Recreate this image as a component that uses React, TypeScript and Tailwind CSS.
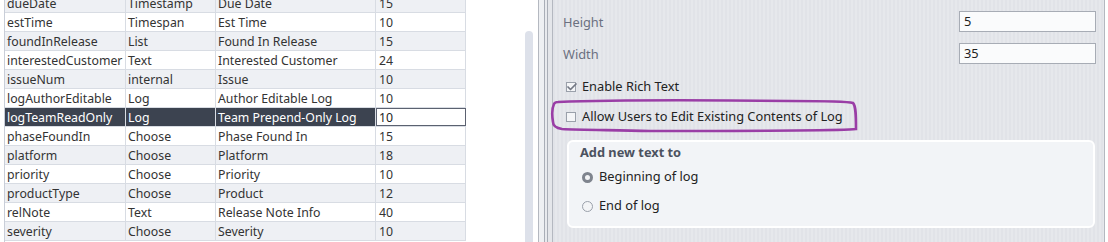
import { Check } from "lucide-react";

const rows = [
  ["dueDate", "Timestamp", "Due Date", "15"],
  ["estTime", "Timespan", "Est Time", "10"],
  ["foundInRelease", "List", "Found In Release", "15"],
  ["interestedCustomer", "Text", "Interested Customer", "24"],
  ["issueNum", "internal", "Issue", "10"],
  ["logAuthorEditable", "Log", "Author Editable Log", "10"],
  ["logTeamReadOnly", "Log", "Team Prepend-Only Log", "10"],
  ["phaseFoundIn", "Choose", "Phase Found In", "15"],
  ["platform", "Choose", "Platform", "18"],
  ["priority", "Choose", "Priority", "10"],
  ["productType", "Choose", "Product", "12"],
  ["relNote", "Text", "Release Note Info", "40"],
  ["severity", "Choose", "Severity", "10"],
];

const SELECTED = 6;

function FieldTable() {
  return (
    <div className="mt-[-6px] ml-1 w-[462px] border-l border-[#c9ced8]">
      {rows.map((r, i) => {
        const sel = i === SELECTED;
        const rowBg = sel ? "bg-[#3c4350] text-white" : i % 2 === 0 ? "bg-[#eef0f4]" : "bg-white";
        return (
          <div key={r[0]} className={`flex h-[19px] border-b border-[#d8dce3] ${rowBg}`}>
            <div className="w-[121px] pl-[2px] leading-[19px] border-r border-[#d8dce3]">{r[0]}</div>
            <div className="w-[90px] pl-[2px] leading-[19px] border-r border-[#d8dce3]">{r[1]}</div>
            <div className="w-[160px] pl-[2px] leading-[19px] border-r border-[#d8dce3]">{r[2]}</div>
            {sel ? (
              <div className="w-[90px] pl-[2px] leading-[17px] bg-white text-[#222] border border-[#5b6170]">{r[3]}</div>
            ) : (
              <div className="w-[90px] pl-[3px] leading-[19px] border-r border-[#d8dce3]">{r[3]}</div>
            )}
          </div>
        );
      })}
    </div>
  );
}

function CheckRow({ checked, label }: { checked: boolean; label: string }) {
  return (
    <div className="flex items-center h-5 pl-[13px] gap-[6px] text-[#222]">
      <div className="relative w-[10px] h-[10px] border border-[#9aa0aa] bg-[#f4f5f7]">
        {checked && (
          <Check className="absolute -top-[2px] -left-[1px] w-[12px] h-[12px] text-[#737884]" strokeWidth={3.5} />
        )}
      </div>
      <span>{label}</span>
    </div>
  );
}

function Radio({ checked, label }: { checked: boolean; label: string }) {
  return (
    <div className="flex items-center h-5 gap-[6px] text-[#222]">
      {checked ? (
        <div className="w-[11px] h-[11px] rounded-full border-[3px] border-[#7f848e] bg-[#f3f4f6]" />
      ) : (
        <div className="w-[11px] h-[11px] rounded-full border border-[#9aa0aa] bg-[#f3f4f6]" />
      )}
      <span>{label}</span>
    </div>
  );
}

export default function App() {
  return (
    <div
      className="flex w-[1108px] h-[242px] overflow-hidden bg-white text-[12.3px] text-[#333]"
      style={{ fontFamily: '"Noto Sans", "Open Sans", sans-serif' }}
    >
      <div className="flex w-[538px] shrink-0">
        <FieldTable />
        <div className="flex-1" />
        <div className="mt-[31px] mr-[5px] w-[8px] rounded-t-[4px] bg-[#dde1ea]" />
      </div>

      <div className="w-px bg-[#b4b8c0]" />
      <div className="w-[5px] bg-[#eef0f3]" />
      <div className="w-px bg-[#a9aeb7]" />
      <div className="w-[2px] bg-[#e8eaee]" />
      <div className="w-px bg-[#a9aeb7]" />
      <div className="w-[4px] bg-[#e4e6ea]" />
      <div className="w-px bg-[#b4b8c0]" />

      <div className="relative flex-1 pr-2 text-[12.8px] bg-[repeating-linear-gradient(90deg,#e1e3e8_0px,#e1e3e8_2px,#e6e8ec_2px,#e6e8ec_4px)]">
        <div className="pt-[11px] flex flex-col gap-[11px]">
          <div className="flex items-center justify-between h-[21px] pl-[10px]">
            <span className="pt-[3px] text-[#6b7080]">Height</span>
            <div className="w-[137px] h-[21px] bg-[#fafbfc] border border-[#a7acb5] pl-[4px] leading-[19px] text-[#222]">5</div>
          </div>
          <div className="flex items-center justify-between h-[21px] pl-[10px]">
            <span className="pt-[3px] text-[#6b7080]">Width</span>
            <div className="w-[137px] h-[21px] bg-[#fafbfc] border border-[#a7acb5] pl-[4px] leading-[19px] text-[#222]">35</div>
          </div>
        </div>
        <div className="mt-[13px]">
          <CheckRow checked label="Enable Rich Text" />
        </div>
        <div className="mt-[10px]">
          <CheckRow checked={false} label="Allow Users to Edit Existing Contents of Log" />
        </div>
        <div className="mt-[13px] ml-[14px] mr-[1px] h-[88px] rounded-[6px] border-2 border-white bg-[#f2f4f7] pl-[13px] pt-[1px]">
          <div className="font-bold text-[#4c5260] -ml-[2px] leading-[18px]">Add new text to</div>
          <div className="mt-[6px]">
            <Radio checked label="Beginning of log" />
          </div>
          <div className="mt-[9px]">
            <Radio checked={false} label="End of log" />
          </div>
        </div>

        <svg className="absolute left-[-3px] top-[98px]" width="310" height="36" viewBox="0 0 310 36" fill="none">
          <path
            d="M8 4 C60 2 150 2 240 3 C270 3 296 3 303 5 C306 8 306 18 306 31 C290 33 200 33 100 33 C60 32 30 32 12 31 C6 30 3 28 3 24 C2 18 2 10 4 6 C5 4 6 4 8 4 Z"
            stroke="#9a3ea6"
            strokeWidth="2.6"
          />
        </svg>
      </div>
      <div className="w-px bg-[#b4b8c0]" />
      <div className="w-[3px] bg-white" />
    </div>
  );
}
